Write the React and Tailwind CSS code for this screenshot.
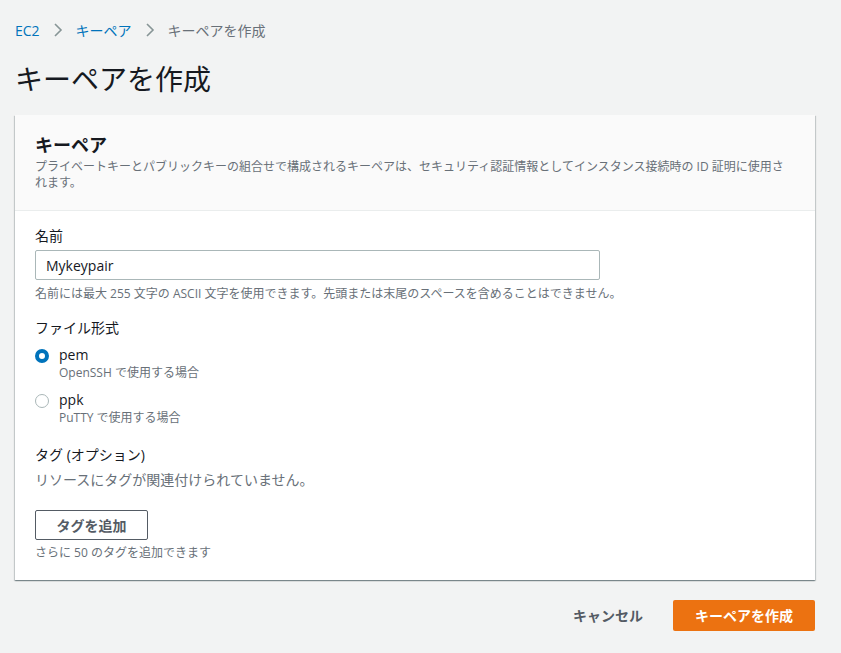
import React from "react";

const F = { fontFamily: '"Open Sans", "Noto Sans CJK JP", sans-serif' };

function Chevron() {
  return (
    <svg width="10" height="14" viewBox="0 0 10 14" className="mx-[13px]">
      <path d="M2 1l6 6-6 6" fill="none" stroke="#879596" strokeWidth="1.6" />
    </svg>
  );
}

function Radio({ checked }) {
  return checked ? (
    <span className="mt-[4px] inline-block h-[14px] w-[14px] shrink-0 rounded-full border-[4px] border-[#0073bb] bg-white" />
  ) : (
    <span className="mt-[4px] inline-block h-[14px] w-[14px] shrink-0 rounded-full border border-[#aab7b8] bg-white" />
  );
}

export default function App() {
  return (
    <div style={F} className="min-h-[653px] w-full bg-[#f2f3f3] px-[15px] pt-[19px] text-[#16191f]">
      <nav className="flex h-[22px] items-center text-[14px]">
        <span className="text-[#0073bb]">EC2</span>
        <Chevron />
        <span className="text-[#0073bb]">キーペア</span>
        <Chevron />
        <span className="text-[#687078]">キーペアを作成</span>
      </nav>
      <h1 className="mt-[20px] text-[28px] font-normal leading-[36px]">キーペアを作成</h1>
      <div className="mt-[18px] w-[800px] bg-white shadow-[0_1px_1px_0_rgba(0,28,36,0.3),1px_1px_1px_0_rgba(0,28,36,0.15),-1px_1px_1px_0_rgba(0,28,36,0.15)]">
        <div className="border-b border-[#eaeded] bg-[#fafafa] px-[20px] pb-[19px] pt-[16px]">
          <h2 className="text-[18px] font-bold leading-[28px]">キーペア</h2>
          <p className="text-[12px] leading-[16px] text-[#687078]">
            プライベートキーとパブリックキーの組合せで構成されるキーペアは、セキュリティ認証情報としてインスタンス接続時の ID 証明に使用されます。
          </p>
        </div>
        <div className="px-[20px] pb-[19px] pt-[14px]">
          <div className="text-[14px] leading-[22px]">名前</div>
          <div className="mt-[3px] flex h-[30px] w-[565px] items-center rounded-[2px] border border-[#aab7b8] px-[10px] text-[14px]">
            Mykeypair
          </div>
          <div className="mt-[6px] text-[12px] leading-[16px] text-[#687078]">
            名前には最大 255 文字の ASCII 文字を使用できます。先頭または末尾のスペースを含めることはできません。
          </div>
          <div className="mt-[15px] text-[14px] leading-[22px]">ファイル形式</div>
          <div className="mt-[6px] flex gap-[10px]">
            <Radio checked />
            <div>
              <div className="text-[14px] leading-[20px]">pem</div>
              <div className="text-[12px] leading-[16px] text-[#687078]">OpenSSH で使用する場合</div>
            </div>
          </div>
          <div className="mt-[9px] flex gap-[10px]">
            <Radio />
            <div>
              <div className="text-[14px] leading-[20px]">ppk</div>
              <div className="text-[12px] leading-[16px] text-[#687078]">PuTTY で使用する場合</div>
            </div>
          </div>
          <div className="mt-[18px] text-[14px] leading-[22px]">タグ (オプション)</div>
          <div className="mt-[3px] text-[14px] leading-[22px] text-[#687078]">リソースにタグが関連付けられていません。</div>
          <button className="mt-[19px] h-[30px] w-[113px] rounded-[2px] border border-[#545b64] bg-white text-[14px] font-bold text-[#545b64]">
            タグを追加
          </button>
          <div className="mt-[5px] text-[12px] leading-[16px] text-[#687078]">さらに 50 のタグを追加できます</div>
        </div>
      </div>
      <div className="mt-[20px] flex w-[800px] items-center justify-end">
        <button className="mr-[30px] text-[14px] font-bold text-[#545b64]">キャンセル</button>
        <button className="h-[31px] w-[142px] rounded-[2px] bg-[#ec7211] text-[14px] font-bold text-white">
          キーペアを作成
        </button>
      </div>
    </div>
  );
}
